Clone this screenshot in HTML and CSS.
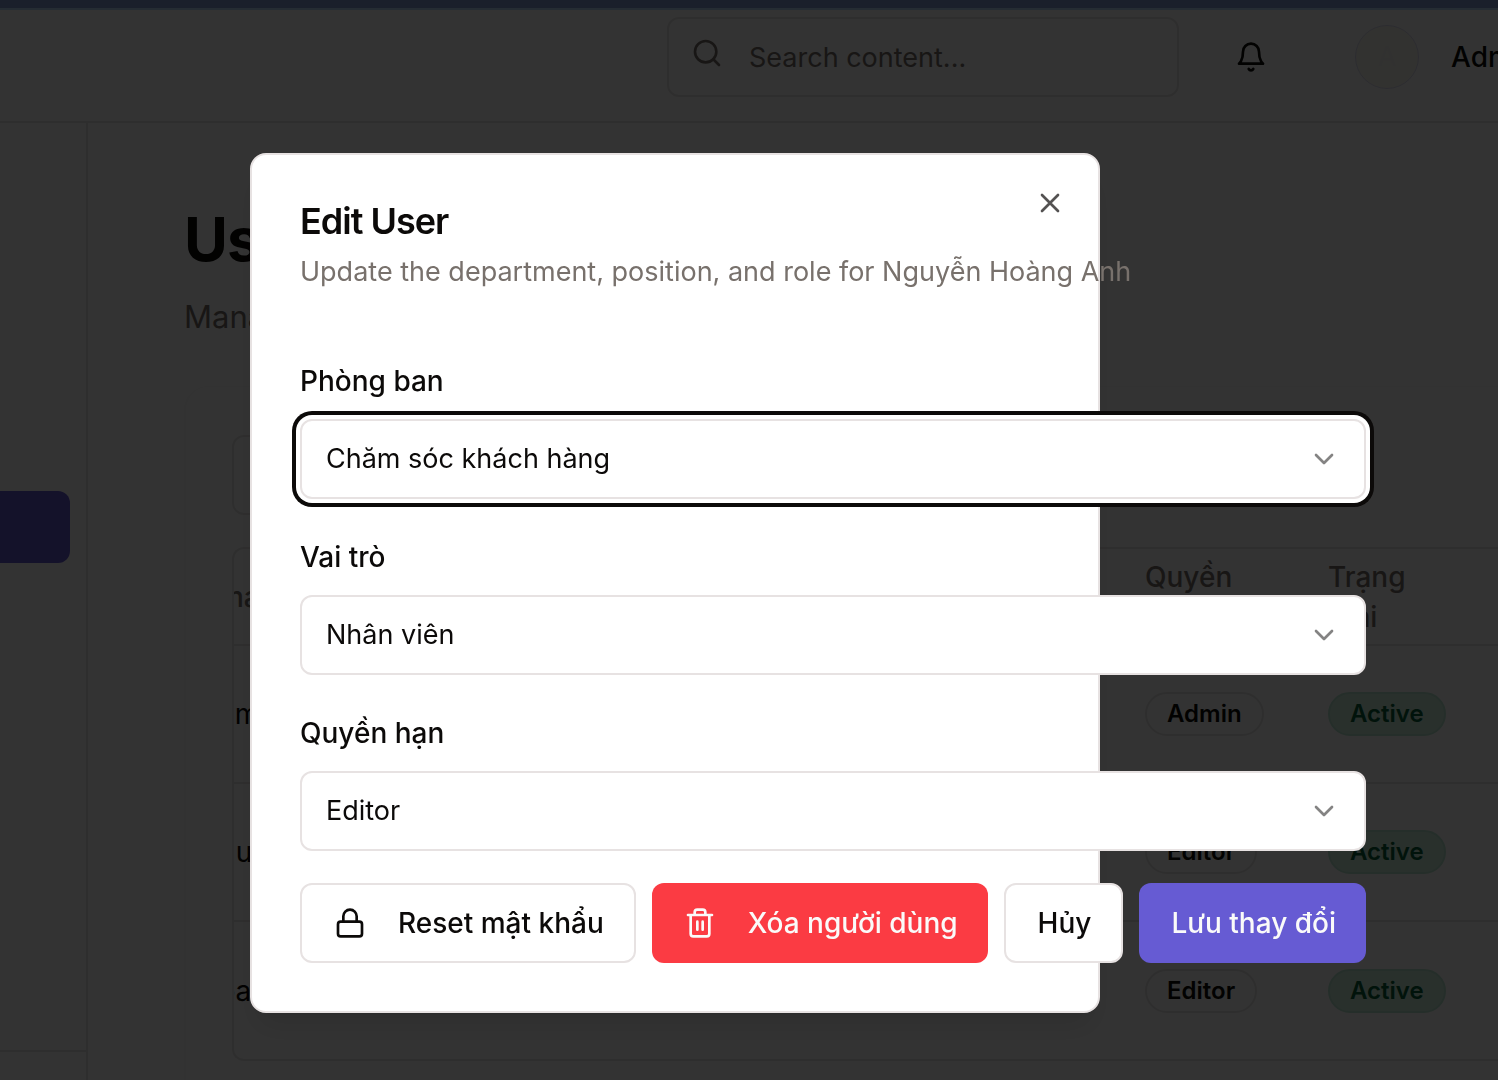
FILE: index.html
```html
<!DOCTYPE html>
<html lang="vi">
<head>
<meta charset="utf-8">
<title>User Management</title>
<link rel="stylesheet" href="styles.css">
</head>
<body>
<div class="app">
  <div class="topstrip"></div>
  <header class="header">
    <label class="search">
      <svg class="icon" viewBox="0 0 24 24" aria-hidden="true"><circle cx="11" cy="11" r="8"/><path d="m21 21-4.3-4.3"/></svg>
      <input type="search" placeholder="Search content..." aria-label="Search content">
    </label>
    <button class="bell" type="button" aria-label="Notifications">
      <svg class="icon" viewBox="0 0 24 24" aria-hidden="true"><path d="M6 8a6 6 0 0 1 12 0c0 7 3 9 3 9H3s3-2 3-9"/><path d="M10.300 21a1.940 1.940 0 0 0 3.400 0"/></svg>
    </button>
    <span class="avatar">A</span>
    <span class="account">Admin</span>
  </header>
  <div class="body">
    <aside class="sidebar">
      <nav><a class="nav-active" href="#users" aria-label="Users"></a></nav>
      <div class="sidebar-foot"></div>
    </aside>
    <main class="main">
      <h1>User Management</h1>
      <p class="lead">Manage users</p>
      <section class="card">
        <input class="filter" type="text" aria-label="Filter users">
        <div class="table-wrap">
          <table>
            <colgroup><col class="col-email"><col class="col-role"><col class="col-status"></colgroup>
            <thead><tr><th>Email</th><th>Quyền<br>hạn</th><th>Trạng<br>thái</th></tr></thead>
            <tbody>
              <tr><td>admin</td><td><span class="badge">Admin</span></td><td><span class="badge badge-active">Active</span></td></tr>
              <tr><td>nguyen</td><td><span class="badge">Editor</span></td><td><span class="badge badge-active">Active</span></td></tr>
              <tr><td>hoang</td><td><span class="badge">Editor</span></td><td><span class="badge badge-active">Active</span></td></tr>
            </tbody>
          </table>
        </div>
      </section>
    </main>
  </div>
</div>

<div class="overlay">
  <div class="dialog" role="dialog" aria-modal="true" aria-labelledby="dialog-title">
    <button class="close" type="button" aria-label="Close">
      <svg class="icon" viewBox="0 0 24 24" aria-hidden="true"><path d="M18 6 6 18M6 6l12 12"/></svg>
    </button>
    <h2 id="dialog-title">Edit User</h2>
    <p class="description">Update the department, position, and role for Nguyễn Hoàng Anh</p>
    <form class="form">
      <div class="field">
        <label for="department">Phòng ban</label>
        <div class="select select-focus">
          <select id="department"><option>Chăm sóc khách hàng</option></select>
          <svg class="icon" viewBox="0 0 24 24" aria-hidden="true"><path d="m6 9 6 6 6-6"/></svg>
        </div>
      </div>
      <div class="field">
        <label for="position">Vai trò</label>
        <div class="select">
          <select id="position"><option>Nhân viên</option></select>
          <svg class="icon" viewBox="0 0 24 24" aria-hidden="true"><path d="m6 9 6 6 6-6"/></svg>
        </div>
      </div>
      <div class="field">
        <label for="role">Quyền hạn</label>
        <div class="select">
          <select id="role"><option>Editor</option></select>
          <svg class="icon" viewBox="0 0 24 24" aria-hidden="true"><path d="m6 9 6 6 6-6"/></svg>
        </div>
      </div>
      <div class="actions">
        <button class="btn" type="button">
          <svg class="icon" viewBox="0 0 24 24" aria-hidden="true"><rect x="3" y="11" width="18" height="11" rx="2"/><path d="M7 11V7a5 5 0 0 1 10 0v4"/></svg>
          Reset mật khẩu
        </button>
        <button class="btn btn-danger" type="button">
          <svg class="icon" viewBox="0 0 24 24" aria-hidden="true"><path d="M3 6h18M19 6v14a2 2 0 0 1-2 2H7a2 2 0 0 1-2-2V6M8 6V4a2 2 0 0 1 2-2h4a2 2 0 0 1 2 2v2M10 11v6M14 11v6"/></svg>
          Xóa người dùng
        </button>
        <button class="btn" type="button">Hủy</button>
        <button class="btn btn-primary" type="submit">Lưu thay đổi</button>
      </div>
    </form>
  </div>
</div>
</body>
</html>
```

FILE: styles.css
```css
* { box-sizing: border-box; }

body {
  margin: 0;
  min-height: 100vh;
  overflow: hidden;
  background: #fff;
  color: #0c0a09;
  font: 400 27px/40px Inter, "Liberation Sans", sans-serif;
}

button, input, select {
  font: inherit;
  color: inherit;
}

h1, h2, p { margin: 0; }

.icon {
  width: 32px;
  height: 32px;
  flex: none;
  fill: none;
  stroke: currentColor;
  stroke-width: 2;
  stroke-linecap: round;
  stroke-linejoin: round;
}

/* Application behind the dialog */
.app {
  display: flex;
  flex-direction: column;
  height: 100vh;
  overflow: hidden;
}

.topstrip {
  flex: none;
  height: 10px;
  background: #829bd7;
  border-bottom: 2px solid #b9dcff;
}

.header {
  display: flex;
  flex: none;
  align-items: center;
  height: 113px;
  padding: 0 0 18px 667px;
  border-bottom: 2px solid #e7e5e4;
}

.search {
  display: flex;
  flex: none;
  align-items: center;
  gap: 26px;
  width: 512px;
  height: 80px;
  padding: 0 22px;
  border: 2px solid #e7e5e4;
  border-radius: 12px;
  color: #78716c;
}

.search .icon { margin-bottom: 8px; }

.search input {
  width: 100%;
  padding: 2px 0 0;
  border: 0;
  background: none;
  outline: none;
}

.search input::placeholder { color: #78716c; opacity: 1; }

.bell {
  display: flex;
  flex: none;
  margin-left: 56px;
  padding: 0;
  border: 0;
  background: none;
}

.avatar {
  display: grid;
  flex: none;
  place-items: center;
  width: 64px;
  height: 64px;
  margin: 0 32px 0 88px;
  border: 1px solid #dcdcf0;
  border-radius: 50%;
  background: #faf8ee;
  color: #f5f4ee;
}

.account { font-size: 28px; font-weight: 500; }

.body { display: flex; flex: 1; min-height: 0; }

.sidebar {
  display: flex;
  flex: none;
  flex-direction: column;
  justify-content: space-between;
  width: 88px;
  padding-top: 368px;
  border-right: 2px solid #e7e5e4;
}

.nav-active {
  display: block;
  height: 72px;
  margin-right: 16px;
  border-radius: 0 12px 12px 0;
  background: #655ad2;
}

.sidebar-foot { height: 30px; border-top: 2px solid #e7e5e4; }

.main { flex: 1; min-width: 0; padding: 80px 0 0 96px; }

.main h1 {
  font-size: 60px;
  font-weight: 700;
  line-height: 72px;
  letter-spacing: -1px;
  white-space: nowrap;
}

.lead {
  margin-top: 18px;
  color: #78716c;
  font-size: 31px;
  line-height: 48px;
}

.card {
  height: 760px;
  margin-top: 45px;
  padding: 48px 0 0 46px;
  border-top: 1px solid #faf9f9;
  border-left: 2px solid #f8f7f7;
  border-radius: 24px 0 0 0;
}

.filter {
  display: block;
  width: 640px;
  height: 80px;
  border: 2px solid #e7e5e4;
  border-radius: 12px;
  background: none;
}

.table-wrap {
  margin-top: 32px;
  overflow: hidden;
  border: 2px solid #e7e5e4;
  border-right: 0;
  border-radius: 12px 0 0 12px;
}

table {
  width: 1600px;
  margin-left: -48px;
  border-collapse: collapse;
  table-layout: fixed;
}

.col-email { width: 943px; }
.col-role { width: 183px; }

th {
  height: 96px;
  padding: 0 16px;
  color: #78716c;
  font-size: 28px;
  font-weight: 500;
  text-align: left;
}

td { height: 138px; padding: 0 16px; font-size: 28px; }

tbody tr { border-top: 2px solid #e7e5e4; }

.badge {
  display: inline-block;
  padding: 4px 20px;
  border: 2px solid #e7e5e4;
  border-radius: 22px;
  font-size: 24px;
  font-weight: 600;
  line-height: 32px;
  vertical-align: middle;
}

.badge-active {
  border-color: #b9e6cf;
  background: #cdeedc;
  color: #05603a;
}

/* Dialog */
.overlay {
  position: fixed;
  inset: 0;
  display: flex;
  align-items: flex-start;
  padding: 153px 0 0 250px;
  background: rgba(0, 0, 0, 0.8);
}

.dialog {
  position: relative;
  flex: none;
  width: 850px;
  padding: 48px;
  border: 2px solid #e7e2e2;
  border-radius: 16px;
  background: #fff;
  box-shadow: 0 20px 30px -6px rgba(0, 0, 0, 0.1), 0 8px 12px -8px rgba(0, 0, 0, 0.1);
}

.close {
  position: absolute;
  top: 32px;
  right: 32px;
  display: flex;
  padding: 0;
  border: 0;
  background: none;
  opacity: 0.7;
}

.dialog h2 {
  font-size: 36px;
  font-weight: 600;
  line-height: 36px;
  letter-spacing: -1px;
}

.description {
  margin-top: 13px;
  color: #78716c;
  white-space: nowrap;
}

.form {
  display: flex;
  flex-direction: column;
  gap: 32px;
  width: max-content;
  margin-top: 63px;
}

.field { display: grid; gap: 20px; padding-top: 8px; }

.field label {
  font-size: 28px;
  font-weight: 500;
  line-height: 36px;
}

.select { position: relative; }

.select select {
  display: block;
  width: 100%;
  height: 80px;
  padding: 0 24px;
  border: 2px solid #e7e2e2;
  border-radius: 12px;
  outline: none;
  appearance: none;
  background: #fff;
}

.select .icon {
  position: absolute;
  top: 24px;
  right: 26px;
  opacity: 0.5;
  pointer-events: none;
}

.select-focus select { box-shadow: 0 0 0 4px #fff, 0 0 0 8px #0c0a09; }

.actions { display: flex; gap: 16px; }

.btn {
  display: flex;
  align-items: center;
  gap: 32px;
  height: 80px;
  padding: 0 30px 0 32px;
  border: 2px solid #e7e2e2;
  border-radius: 12px;
  background: #fff;
  font-size: 28px;
  font-weight: 500;
  white-space: nowrap;
}

.btn-danger { border: 0; background: #fb3b43; color: #fafaf9; }
.btn-primary { border: 0; background: #665bd3; color: #fafaf9; }
```
